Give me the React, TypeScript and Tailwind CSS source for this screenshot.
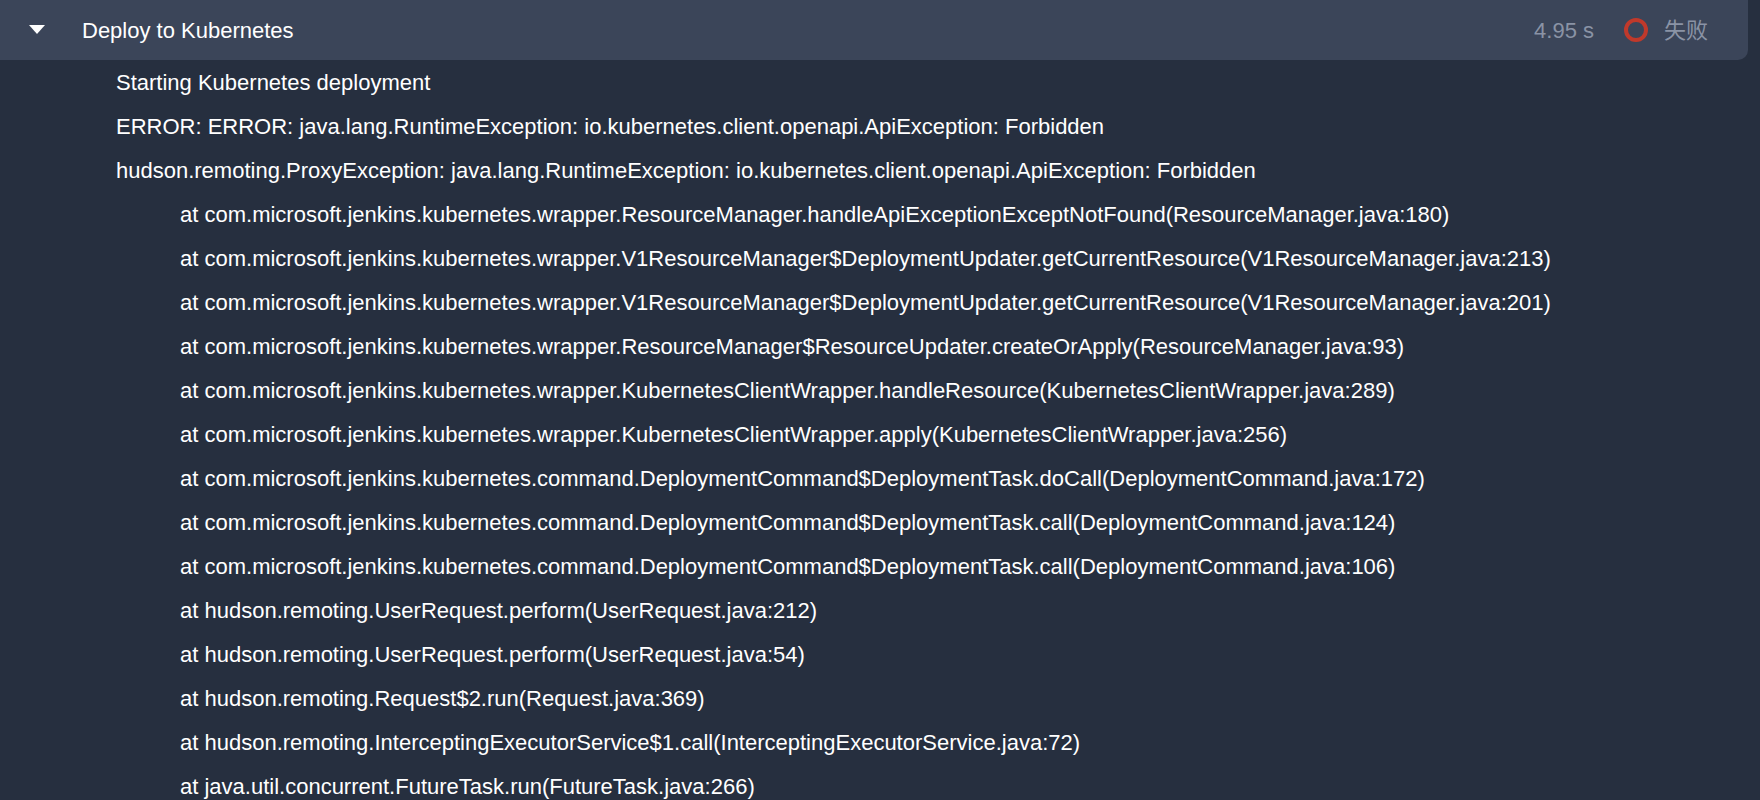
const lines: [boolean, string][] = [
  [false, "Starting Kubernetes deployment"],
  [false, "ERROR: ERROR: java.lang.RuntimeException: io.kubernetes.client.openapi.ApiException: Forbidden"],
  [false, "hudson.remoting.ProxyException: java.lang.RuntimeException: io.kubernetes.client.openapi.ApiException: Forbidden"],
  [true, "at com.microsoft.jenkins.kubernetes.wrapper.ResourceManager.handleApiExceptionExceptNotFound(ResourceManager.java:180)"],
  [true, "at com.microsoft.jenkins.kubernetes.wrapper.V1ResourceManager$DeploymentUpdater.getCurrentResource(V1ResourceManager.java:213)"],
  [true, "at com.microsoft.jenkins.kubernetes.wrapper.V1ResourceManager$DeploymentUpdater.getCurrentResource(V1ResourceManager.java:201)"],
  [true, "at com.microsoft.jenkins.kubernetes.wrapper.ResourceManager$ResourceUpdater.createOrApply(ResourceManager.java:93)"],
  [true, "at com.microsoft.jenkins.kubernetes.wrapper.KubernetesClientWrapper.handleResource(KubernetesClientWrapper.java:289)"],
  [true, "at com.microsoft.jenkins.kubernetes.wrapper.KubernetesClientWrapper.apply(KubernetesClientWrapper.java:256)"],
  [true, "at com.microsoft.jenkins.kubernetes.command.DeploymentCommand$DeploymentTask.doCall(DeploymentCommand.java:172)"],
  [true, "at com.microsoft.jenkins.kubernetes.command.DeploymentCommand$DeploymentTask.call(DeploymentCommand.java:124)"],
  [true, "at com.microsoft.jenkins.kubernetes.command.DeploymentCommand$DeploymentTask.call(DeploymentCommand.java:106)"],
  [true, "at hudson.remoting.UserRequest.perform(UserRequest.java:212)"],
  [true, "at hudson.remoting.UserRequest.perform(UserRequest.java:54)"],
  [true, "at hudson.remoting.Request$2.run(Request.java:369)"],
  [true, "at hudson.remoting.InterceptingExecutorService$1.call(InterceptingExecutorService.java:72)"],
  [true, "at java.util.concurrent.FutureTask.run(FutureTask.java:266)"],
];

export default function App() {
  return (
    <div className="h-[800px] overflow-hidden bg-[#262f3f] text-[22px] text-white" style={{ fontFamily: '"Liberation Sans", "Noto Sans CJK SC", sans-serif' }}>
      <div className="mr-[12px] flex h-[60px] items-center rounded-br-[10px] bg-[#3b4559]">
        <svg className="ml-[28px] mr-[36px]" width="18" height="12" viewBox="0 0 18 12"><path d="M1 1h16L9 10z" fill="#fff" /></svg>
        <span className="flex-1">Deploy to Kubernetes</span>
        <span className="text-[#8a93a5]">4.95 s</span>
        <span className="ml-[30px] inline-block h-[24px] w-[24px] rounded-full border-[4px] border-[#c0392b]" />
        <span className="ml-[16px] mr-[40px] text-[#8a93a5]">失败</span>
      </div>
      <div>
        {lines.map(([indent, t], i) => (
          <div key={i} className={`flex h-[44px] items-center whitespace-nowrap ${indent ? "pl-[180px]" : "pl-[116px]"}`}>{t}</div>
        ))}
      </div>
    </div>
  );
}
